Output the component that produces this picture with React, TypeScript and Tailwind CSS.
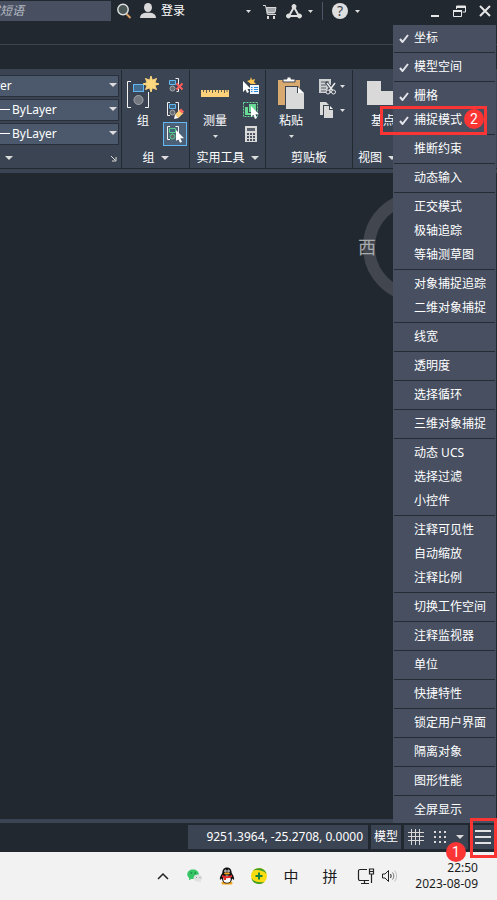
import type { ReactNode } from "react";

interface MenuItem {
  label: string;
  checked?: boolean;
}

const menuGroups: MenuItem[][] = [
  [{ label: "坐标", checked: true }],
  [{ label: "模型空间", checked: true }],
  [
    { label: "栅格", checked: true },
    { label: "捕捉模式", checked: true },
  ],
  [{ label: "推断约束" }],
  [{ label: "动态输入" }],
  [{ label: "正交模式" }, { label: "极轴追踪" }, { label: "等轴测草图" }],
  [{ label: "对象捕捉追踪" }, { label: "二维对象捕捉" }],
  [{ label: "线宽" }],
  [{ label: "透明度" }],
  [{ label: "选择循环" }],
  [{ label: "三维对象捕捉" }],
  [{ label: "动态 UCS" }, { label: "选择过滤" }, { label: "小控件" }],
  [{ label: "注释可见性" }, { label: "自动缩放" }, { label: "注释比例" }],
  [{ label: "切换工作空间" }],
  [{ label: "注释监视器" }],
  [{ label: "单位" }],
  [{ label: "快捷特性" }],
  [{ label: "锁定用户界面" }],
  [{ label: "隔离对象" }],
  [{ label: "图形性能" }],
  [{ label: "全屏显示" }],
];

function Caret({ small = false }: { small?: boolean }) {
  return (
    <svg width={small ? 5 : 8} height={small ? 3 : 4} viewBox="0 0 8 4" preserveAspectRatio="none" className="shrink-0">
      <path d="M0 0h8L4 4z" fill="#dcdcdc" />
    </svg>
  );
}

/* ---------- Title bar ---------- */

function TitleBar() {
  return (
    <header className="flex h-[45px] items-start border-b border-[#3d4450]">
      <div className="mt-px flex h-5 w-[111px] shrink-0 justify-end overflow-hidden bg-[#474f61]">
        <input
          aria-label="搜索"
          defaultValue="键入关键字或短语"
          className="w-[187px] shrink-0 bg-transparent px-1 text-xs text-[#b6bac2] italic outline-none"
        />
      </div>
      <div className="flex h-[22px] flex-1 items-center">
        <button aria-label="搜索" className="ml-[5px]">
          <svg width="16" height="16" viewBox="0 0 16 16">
            <path d="M10.500 11l4 4" stroke="#d9a066" strokeWidth="2" />
            <circle cx="7" cy="6.500" r="5.200" fill="#4b5657" stroke="#dfe3e0" strokeWidth="1.400" />
          </svg>
        </button>
        <button className="ml-2 flex items-center gap-[5px] text-xs text-white">
          <svg width="16" height="16" viewBox="0 0 16 16" fill="#d9d9d9">
            <ellipse cx="8" cy="4.500" rx="4" ry="4.500" />
            <path d="M0 15c0-3.200 2.500-5 5.500-5.300h5c3 .3 5.500 2.100 5.500 5.300z" />
          </svg>
          登录
        </button>
        <button aria-label="登录选项" className="ml-[61px]">
          <Caret small />
        </button>
        <button aria-label="应用商店" className="ml-3">
          <svg width="14" height="15" viewBox="0 0 14 15" fill="none" stroke="#d9d9d9">
            <path d="M0 1.500h2.500L4.500 10.500H13M3.500 9h8" />
            <path d="M3.500 3.500H13l-1 5H4.500z" fill="#a3a6aa" />
            <path d="M5 12v3M11 12v3" strokeWidth="2" />
          </svg>
        </button>
        <button aria-label="连接" className="ml-[9px] flex items-center gap-[6px]">
          <svg width="16" height="15" viewBox="0 0 16 15" fill="#e0e0e0" stroke="#e0e0e0">
            <path d="M8 3L3 12h10z" fill="none" strokeWidth="2" />
            <circle cx="8" cy="2.500" r="2" />
            <circle cx="2.500" cy="12" r="2" />
            <circle cx="13.500" cy="12" r="2" />
          </svg>
          <Caret small />
        </button>
        <span className="ml-[9px] h-[18px] w-px bg-[#4d5669]" />
        <button aria-label="帮助" className="ml-[9px] flex items-center gap-[7px]">
          <span className="flex size-4 items-center justify-center rounded-full bg-[#dedede] text-sm text-[#3c434d]">?</span>
          <Caret small />
        </button>
        <div className="mr-[6px] ml-auto flex items-center gap-[13px]">
          <button aria-label="最小化">
            <svg width="10" height="12" viewBox="0 0 10 12">
              <path d="M1 11h8" stroke="#e6e6e6" strokeWidth="2" />
            </svg>
          </button>
          <button aria-label="还原">
            <svg width="13" height="12" viewBox="0 0 13 12" fill="none" stroke="#e6e6e6">
              <path d="M3.500 4V1h9v6h-3" />
              <path d="M3 2h10M0 6h9" strokeWidth="2" />
              <path d="M.5 5v6.500h8V5" />
            </svg>
          </button>
          <button aria-label="关闭">
            <svg width="12" height="12" viewBox="0 0 12 12">
              <path d="M1 1l10 10M11 1L1 11" stroke="#e6e6e6" strokeWidth="2" />
            </svg>
          </button>
        </div>
      </div>
    </header>
  );
}

/* ---------- Ribbon ---------- */

function Panel({ className, title, caret, children }: { className: string; title: string; caret?: boolean; children: ReactNode }) {
  return (
    <section className={`flex shrink-0 flex-col overflow-hidden border-r border-[#232931] ${className}`}>
      <div className="flex flex-1 pt-1">{children}</div>
      <h2 className="flex h-5 items-center justify-center gap-[6px] text-xs whitespace-nowrap">
        {title}
        {caret && <Caret />}
      </h2>
    </section>
  );
}

function BigButton({ label, caret, children }: { label: string; caret?: boolean; children: ReactNode }) {
  return (
    <button className="flex w-10 shrink-0 flex-col items-center text-xs">
      <span className="flex h-[38px] items-center">{children}</span>
      <span className="h-[18px] leading-[18px] whitespace-nowrap">{label}</span>
      {caret && (
        <span className="flex h-2 items-end">
          <Caret small />
        </span>
      )}
    </button>
  );
}

function LayerSelect({ label, line }: { label: string; line?: boolean }) {
  return (
    <div className="relative flex h-[22px] w-[119px] justify-end overflow-hidden border border-l-0 border-[#2a303b] bg-[#4c586b]">
      <select
        aria-label={label}
        className={`w-40 shrink-0 appearance-none bg-transparent text-xs text-white outline-none ${line ? "pl-[54px]" : "pl-[9px]"}`}
      >
        <option>ByLayer</option>
      </select>
      {line && <span className="absolute top-[9px] left-0 h-px w-[10px] bg-white" />}
      <span className="pointer-events-none absolute top-[7px] right-px">
        <Caret />
      </span>
    </div>
  );
}

function Brackets({ color, rightOnly, children }: { color: string; rightOnly?: boolean; children?: ReactNode }) {
  return (
    <svg width="18" height="18" viewBox="0 0 18 18" fill="none">
      {!rightOnly && <path d="M4 1.500H1.500v13H4" stroke="#f0f0f0" />}
      <path d="M9.500 1.500h3v13h-2" stroke="#f0f0f0" />
      <path d="M3.500 3.500h6v4h-6z" stroke={color} fill="#3f6480" />
      <circle cx="6.500" cy="11.500" r="2.500" stroke={color === "#57cf87" ? color : "#a9a9a9"} fill="#666c75" />
      {children}
    </svg>
  );
}

function Ribbon() {
  return (
    <div className="mt-6 h-[104px] bg-[#3b4453] text-white">
      <div className="flex h-[100px] overflow-hidden border-y border-[#232931] border-t-[#3b4453]">
        <section className="flex w-[122px] shrink-0 flex-col border-r border-[#232931]">
          <div className="flex flex-1 flex-col gap-[2px] pt-[5px]">
            <LayerSelect label="颜色" />
            <LayerSelect label="线宽" line />
            <LayerSelect label="线型" line />
          </div>
          <div className="flex h-5 items-center justify-between pr-1 pl-[5px]">
            <Caret />
            <button aria-label="特性">
              <svg width="7" height="7" viewBox="0 0 7 7" fill="none" stroke="#dcdcdc">
                <path d="M1 1l4 4M6 2v4H2" />
              </svg>
            </button>
          </div>
        </section>

        <Panel className="w-[68px]" title="组" caret>
          <div className="flex pl-px">
            <BigButton label="组">
              <svg width="34" height="36" viewBox="0 0 34 36" fill="none">
                <path d="M5 6.500H1.500v26H5M19 32.500h3.500V17" stroke="#f4f4f4" />
                <rect x="7.500" y="9.500" width="10" height="7" fill="#456d91" stroke="#62b8f5" />
                <circle cx="12.500" cy="25" r="4.500" fill="#737880" stroke="#a5a8ac" />
                <path
                  d="M25 1l1.400 4.200L30.500 3.500l-1.700 4.100L33 9l-4.200 1.400 1.700 4.100-4.100-1.700L25 17l-1.400-4.200-4.100 1.700 1.700-4.100L17 9l4.200-1.400-1.700-4.100 4.100 1.700z"
                  fill="#ffd77d"
                  stroke="#ffd77d"
                />
              </svg>
            </BigButton>
          </div>
          <div className="flex flex-col">
            <button aria-label="解除编组" className="flex h-6 w-6 items-center justify-center">
              <Brackets color="#62b8f5" rightOnly>
                <path d="M10.500 6.500l6 6M16.500 6.500l-6 6" stroke="#ff5c5c" strokeWidth="2" />
              </Brackets>
            </button>
            <button aria-label="组编辑" className="flex h-6 w-6 items-center justify-center">
              <Brackets color="#62b8f5">
                <path d="M9 13.500l5-5 3.500 3.500-5 5z" fill="#ffd27a" />
                <path d="M13 9.500L15 7.500l3 3-2 2z" fill="#ff6464" />
                <path d="M8 18l1-4.500 3.500 3.500z" fill="#fff" />
              </Brackets>
            </button>
            <button aria-label="启用组选择" className="flex h-6 w-6 items-center justify-center border border-[#62b8f5] bg-[#4c6178]">
              <Brackets color="#57cf87">
                <path d="M10 5v11l2.300-2.200 1.700 4 2-1-1.700-3.600H18z" fill="#fff" />
              </Brackets>
            </button>
          </div>
        </Panel>

        <Panel className="w-[76px]" title="实用工具" caret>
          <div className="flex pl-[5px]">
            <BigButton label="测量" caret>
              <svg width="28" height="8" viewBox="0 0 28 8">
                <path d="M0 1h28v7H0z" fill="#ffd27a" />
                <path d="M2.500 1v2M5.500 1v3M8.500 1v2M11.500 1v3M14.500 1v2M17.500 1v3M20.500 1v2M23.500 1v3M26 1v2" stroke="#68614f" />
              </svg>
            </BigButton>
          </div>
          <div className="flex flex-col pl-1">
            <button aria-label="快速选择" className="flex h-6 w-6 items-center justify-center">
              <svg width="18" height="18" viewBox="0 0 18 18">
                <path d="M9 0l1 3 3-1-1 3 2 2H9L5 4l3-1z" fill="#ffc552" />
                <path d="M1 4v11l2.500-2.500L5 16l2-1-1.500-3H9z" fill="#fff" />
                <path d="M8 8h9v9H8z" fill="#eef4fa" />
                <path d="M9 10.500h1.500M12 10.500h4M9 12.500h1.500M12 12.500h4M9 14.500h1.500M12 14.500h4" stroke="#258cdf" />
              </svg>
            </button>
            <button aria-label="全部选择" className="flex h-6 w-6 items-center justify-center">
              <svg width="18" height="18" viewBox="0 0 18 18" fill="none">
                <path d="M1.500 1.500h14v14h-14z" stroke="#69d996" strokeDasharray="2 1" />
                <path d="M3 6h3v6h5v2H3zM7 3h7v8H7z" fill="#69d996" />
                <path d="M9 5v11l2.500-2.200L13 18l2-1-1.500-3.700H17z" fill="#fff" />
              </svg>
            </button>
            <button aria-label="快速计算器" className="flex h-6 w-6 items-center justify-center">
              <svg width="12" height="16" viewBox="0 0 12 16">
                <path d="M0 0h12v16H0z" fill="#d9d9d9" />
                <path d="M2 2h8v3H2z" fill="#59616d" />
                <path d="M2 8h8M2 11h8M2 14h8" stroke="#4a525f" strokeWidth="2" strokeDasharray="2 1" />
              </svg>
            </button>
          </div>
        </Panel>

        <Panel className="w-[87px]" title="剪贴板">
          <div className="flex pl-[5px]">
            <BigButton label="粘贴" caret>
              <svg width="26" height="32" viewBox="0 0 26 32">
                <path d="M0 3h22v25H0z" fill="#d9aa70" />
                <path d="M5 5V2h4V0h4v2h4v3z" fill="#fff" stroke="#3b4453" />
                <path d="M7 9h13l6 7v16H7z" fill="#3b4453" />
                <path d="M8 10h11v6h7v16H8z" fill="#d9d9d9" />
                <path d="M20 10l6 6h-6z" fill="#fff" />
              </svg>
            </BigButton>
          </div>
          <div className="flex flex-col pl-2">
            <button aria-label="剪切" className="flex h-6 w-8 items-center gap-1">
              <svg width="17" height="17" viewBox="0 0 17 17" fill="none">
                <path d="M0 1h12v14H0z" fill="#cfd0d1" />
                <path d="M2 4h8M2 7h5M2 10h5M2 13h5" stroke="#525a66" />
                <path d="M7 4l7 9M16 4l-7 9" stroke="#3b4453" strokeWidth="3" />
                <path d="M8 5l6 8M16 5l-6 8" stroke="#e8e8e8" strokeWidth="1.500" />
                <circle cx="9" cy="14" r="2" fill="#3b4453" stroke="#e8e8e8" />
                <circle cx="14.500" cy="14" r="2" fill="#3b4453" stroke="#e8e8e8" />
              </svg>
              <Caret small />
            </button>
            <button aria-label="复制" className="flex h-6 w-8 items-center gap-1">
              <svg width="17" height="17" viewBox="0 0 17 17">
                <path d="M1 0h6l3 3v10H1z" fill="#d9d9d9" />
                <path d="M4 3h7l4 4v10H4z" fill="#3b4453" />
                <path d="M5 4h5v4h4v8H5z" fill="#d9d9d9" />
                <path d="M11 4l3 3h-3z" fill="#fff" />
              </svg>
              <Caret small />
            </button>
          </div>
        </Panel>

        <section className="flex flex-1 flex-col overflow-hidden">
          <div className="flex flex-1 pt-1 pl-[10px]">
            <BigButton label="基点">
              <svg width="32" height="24" viewBox="0 0 32 24">
                <path d="M0 0h14v10h18v14H0z" fill="#d9d9d9" />
              </svg>
            </BigButton>
          </div>
          <h2 className="flex h-5 items-center gap-[6px] pl-[5px] text-xs">
            视图
            <Caret />
          </h2>
        </section>
      </div>
    </div>
  );
}

/* ---------- Drawing area ---------- */

function Canvas() {
  return (
    <main className="relative flex-1">
      <svg width="110" height="110" viewBox="0 0 110 110" className="absolute top-[19px] right-[24px]">
        <circle cx="55" cy="55" r="49" fill="none" stroke="#42474f" strokeWidth="12" />
      </svg>
      <span className="absolute top-[62px] right-[121px] text-lg leading-6 text-[#a8aaac]">西</span>
    </main>
  );
}

/* ---------- Status bar ---------- */

function StatusBar() {
  return (
    <div className="border-t-4 border-[#3b4453]">
      <div className="flex h-[29px] items-start justify-end gap-[3px] pt-[2px] text-xs text-white">
        <button className="h-6 w-[180px] bg-[#3b4453] pr-[5px] text-right">9251.3964, -25.2708, 0.0000</button>
        <button className="h-6 w-[30px] bg-[#3b4453]">模型</button>
        <div className="flex h-6 w-16 items-center justify-between bg-[#3b4453] px-1">
          <button aria-label="栅格">
            <svg width="16" height="16" viewBox="0 0 16 16" stroke="#d9d9d9">
              <path d="M3.500 0v16M7.500 0v16M11.500 0v16M0 3.500h16M0 7.500h16M0 11.500h16" />
            </svg>
          </button>
          <button aria-label="捕捉模式">
            <svg width="14" height="14" viewBox="0 0 14 14" stroke="#d9d9d9" strokeWidth="2">
              <path d="M1 2h12M1 7h12M1 12h12" strokeDasharray="2 3" />
            </svg>
          </button>
          <button aria-label="捕捉选项">
            <Caret />
          </button>
        </div>
        <button aria-label="自定义" className="flex h-6 w-[26px] items-center justify-center bg-[#3b4453] pr-[2px]">
          <svg width="16" height="16" viewBox="0 0 16 16" stroke="#e2e2e2" strokeWidth="2">
            <path d="M0 2h16M0 8h16M0 14h16" />
          </svg>
        </button>
      </div>
    </div>
  );
}

function StatusMenu() {
  return (
    <div role="menu" className="absolute right-px bottom-[77px] w-[103px] divide-y divide-[#252b34] bg-[#474f61] px-px py-px">
      {menuGroups.map((group, i) => (
        <div key={i} className={`${i > 0 ? "pt-[2px]" : ""} ${i < menuGroups.length - 1 ? "pb-[2px]" : ""}`}>
          {group.map((item) => (
            <button
              key={item.label}
              role="menuitemcheckbox"
              aria-checked={!!item.checked}
              className="flex h-6 w-full items-center text-xs whitespace-nowrap text-white"
            >
              <span className="flex w-5 shrink-0 justify-center pt-px">
                {item.checked && (
                  <svg width="10" height="9" viewBox="0 0 10 9" fill="none">
                    <path d="M1 5l2.500 3L9 1" stroke="#e2e4e8" strokeWidth="2" />
                  </svg>
                )}
              </span>
              {item.label}
            </button>
          ))}
        </div>
      ))}
    </div>
  );
}

/* ---------- Windows taskbar ---------- */

function Taskbar() {
  return (
    <footer className="flex h-12 items-center justify-end bg-[#f2f2f2] pr-[19px] text-[#1c1c1c]">
      <button aria-label="显示隐藏的图标" className="flex w-8 justify-center">
        <svg width="12" height="8" viewBox="0 0 12 8" fill="none" stroke="#222">
          <path d="M1 7l5-5 5 5" strokeWidth="1.500" />
        </svg>
      </button>
      <button aria-label="微信" className="flex w-8 justify-center">
        <svg width="16" height="14" viewBox="0 0 16 14">
          <path d="M6 .5C2.700.5.300 2.600.300 5.300c0 1.600.7 2.800 1.900 3.700L2 11.200l2.200-1.300c3.700.7 7.600-.9 7.600-4.600C11.800 2.600 9.300.5 6 .5z" fill="#35c565" />
          <path d="M11 5.500c-2.600 0-4.500 1.500-4.500 3.600 0 2.700 2.700 4 5.500 3.400l1.800 1-.3-1.700c1-.6 1.800-1.500 1.800-2.700 0-2.100-1.800-3.600-4.300-3.600z" fill="#dfe2e0" />
          <path d="M3.500 4h1.500M7.500 4H9" stroke="#176b36" strokeWidth="1.200" />
          <path d="M9 8.500h1M12.500 8.500h1" stroke="#8b8f8d" />
        </svg>
      </button>
      <button aria-label="QQ" className="flex w-8 justify-center">
        <svg width="16" height="18" viewBox="0 0 16 18">
          <path d="M4 16h3M9 16h3" stroke="#f2a51c" strokeWidth="3" strokeLinecap="round" />
          <path d="M8 .5C5 .5 3.300 2.700 3.300 6 2 8 .8 10 .8 12.300c.5 1 1.500-.3 2-.8C3.300 14.500 5 16.500 8 16.500s4.700-2 5.200-5c.5.500 1.500 1.800 2 .8 0-2.300-1.200-4.300-2.500-6.300C12.700 2.700 11 .5 8 .5z" fill="#111" />
          <ellipse cx="8" cy="12.200" rx="3.700" ry="3.600" fill="#fff" />
          <ellipse cx="6.500" cy="4" rx="1.200" ry="1.600" fill="#fff" />
          <ellipse cx="9.500" cy="4" rx="1.200" ry="1.600" fill="#fff" />
          <path d="M6.800 3.500v1M9.200 3.500v1" stroke="#111" />
          <ellipse cx="8" cy="6.500" rx="3" ry="1" fill="#f2a51c" />
          <path d="M3 8c3 1.500 7 1.500 10 0v2c-2 1-4 1.300-6 1.200V13H4.800v-2.200C4 10.500 3 10 3 10z" fill="#e52a2a" />
        </svg>
      </button>
      <button aria-label="安全卫士" className="flex w-8 justify-center">
        <svg width="16" height="16" viewBox="0 0 16 16">
          <circle cx="8" cy="8" r="8" fill="#fbdc10" />
          <path d="M2 2.500C6-1.500 14-.5 15.500 6 12 2 7 1.500 2 2.500zM.5 10C3 14 8 15 13.500 13.700 9 18 1.500 16 .5 10z" fill="#3d9e2c" />
          <path d="M8 4.500v7M4.500 8h7" stroke="#15843a" strokeWidth="2" />
        </svg>
      </button>
      <button className="w-8 text-[15px]">中</button>
      <button className="w-[46px] text-[15px]">拼</button>
      <button aria-label="网络" className="flex w-[26px] justify-center">
        <svg width="18" height="16" viewBox="0 0 18 16" fill="none" stroke="#222">
          <path d="M10 1.500H3a1.500 1.500 0 0 0-1.500 1.500v8A1.500 1.500 0 0 0 3 12.500h9M7.500 12.500v3M4 15.500h8" strokeWidth="1.200" />
          <path d="M12.500 1h4v5h-4zM14.500 6v9M12.500 3.500h4" strokeWidth="1.200" />
        </svg>
      </button>
      <button aria-label="音量" className="flex w-[22px] justify-center">
        <svg width="16" height="14" viewBox="0 0 16 14" fill="none" stroke="#222">
          <path d="M.5 5h2.500L6.500 1.500v11L3 9H.500z" />
          <path d="M8.500 5c.8 1.200.8 2.800 0 4" />
          <path d="M10.500 3.500c1.800 2 1.800 5 0 7" stroke="#777" />
          <path d="M12.500 1.500c2.800 3.200 2.800 7.800 0 11" stroke="#bbb" />
        </svg>
      </button>
      <div className="w-[77px] text-right text-xs leading-4">
        <p>22:50</p>
        <p>2023-08-09</p>
      </div>
    </footer>
  );
}

function StepBadge({ className, children }: { className: string; children: ReactNode }) {
  return (
    <span
      className={`absolute flex size-5 items-center justify-center rounded-full bg-[#fb3434] font-[Roboto,sans-serif] text-sm leading-none text-white ${className}`}
    >
      {children}
    </span>
  );
}

export default function App() {
  return (
    <div className="relative flex min-h-screen flex-col overflow-hidden bg-[#222830] font-['Noto_Sans','Noto_Sans_CJK_SC',sans-serif]">
      <TitleBar />
      <Ribbon />
      <Canvas />
      <StatusBar />
      <Taskbar />
      <StatusMenu />

      {/* Tutorial annotations */}
      <div className="pointer-events-none absolute right-[10px] bottom-[765px] h-[29px] w-[107px] border-3 border-[#fb3434]" />
      <StepBadge className="right-[13px] bottom-[771px]">2</StepBadge>
      <div className="pointer-events-none absolute right-0 bottom-[42px] h-10 w-[27px] border-3 border-[#fb3434]" />
      <StepBadge className="right-[31px] bottom-[38px]">1</StepBadge>
    </div>
  );
}
